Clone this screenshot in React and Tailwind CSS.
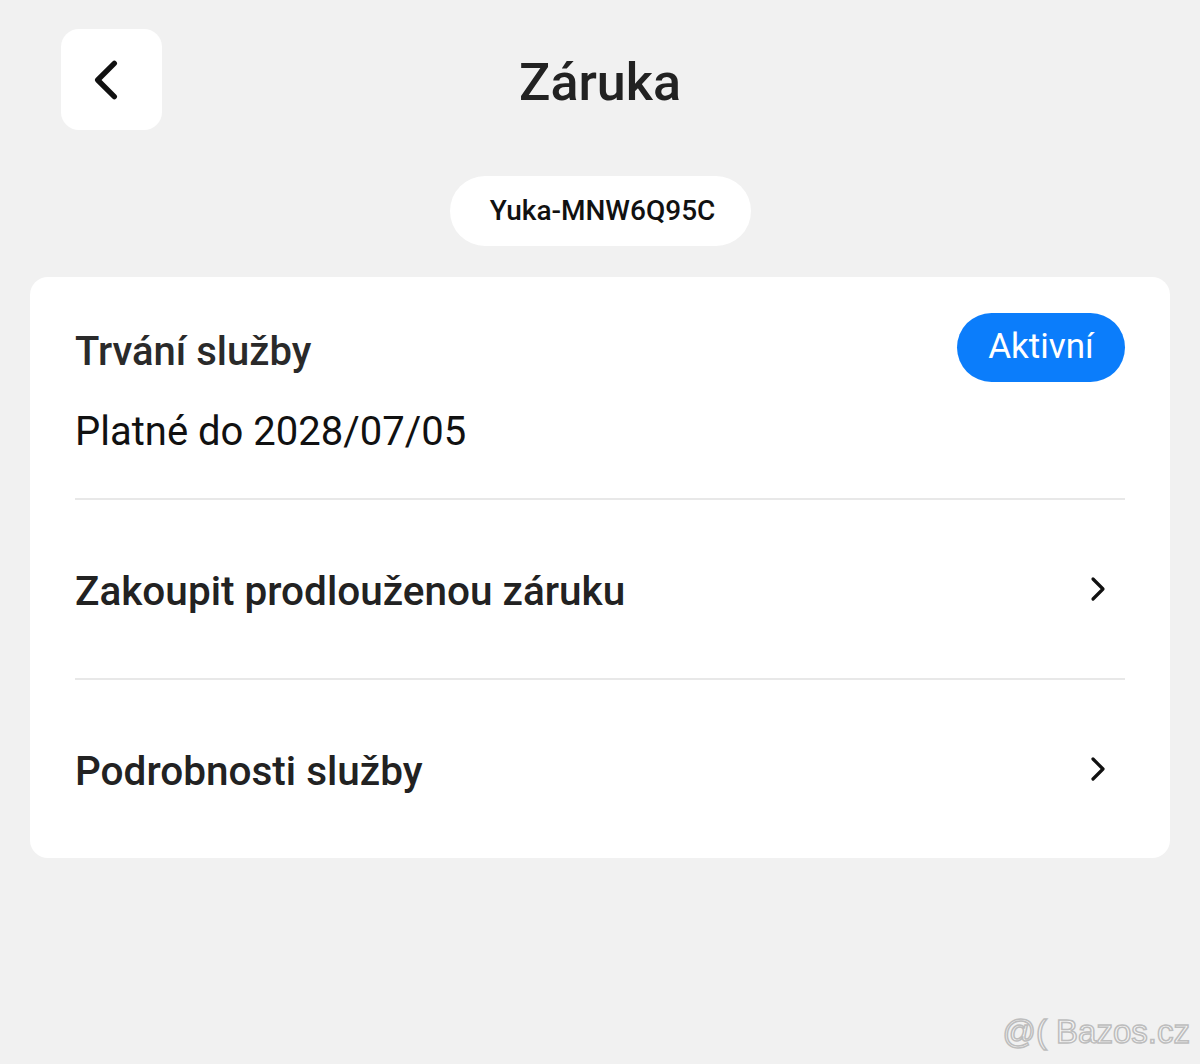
import React from 'react';

function Chevron({ dir = 'right', className = '' }) {
    return (
        <svg className={className} viewBox="0 0 18 26" fill="none" stroke="currentColor" strokeWidth="3.2" strokeLinecap="round" strokeLinejoin="round">
            <path d={dir === 'right' ? 'M4 3 L14 13 L4 23' : 'M14 3 L4 13 L14 23'} />
        </svg>
    );
}

function Row({ label }) {
    return (
        <div className="h-[180px] flex items-center justify-between border-t-2 border-[#e8e8e8]">
            <span className="mt-[4px] text-[40.5px] font-medium text-[#222]">{label}</span>
            <Chevron className="w-[18px] h-[26px] mr-[18px] text-[#111]" />
        </div>
    );
}

export default function App() {
    return (
        <div className="relative w-[1200px] h-[1064px] bg-[#f1f1f1] overflow-hidden font-['Roboto',sans-serif]">
            {/* Header */}
            <div className="relative h-[160px] flex items-start justify-center">
                <button className="absolute left-[61px] top-[29px] w-[101px] h-[101px] bg-white rounded-[18px] flex items-center justify-center">
                    <Chevron dir="left" className="w-[30px] h-[48px] text-[#111] -ml-[12px]" />
                </button>
                <h1 className="mt-[53px] text-[52px] leading-[60px] font-medium text-[#222]">Záruka</h1>
            </div>

            {/* Device pill */}
            <div className="flex justify-center mt-[16px]">
                <div className="w-[301px] h-[70px] bg-white rounded-full flex items-center justify-center pl-[5px]">
                    <span className="text-[28px] font-medium text-[#111]">Yuka-MNW6Q95C</span>
                </div>
            </div>

            {/* Card */}
            <div className="mx-[30px] mt-[31px] bg-white rounded-[18px] px-[45px]">
                <div className="h-[221px] pt-[36px]">
                    <div className="flex items-start justify-between">
                        <span className="mt-[9px] text-[40px] font-medium text-[#2a2a2a]">Trvání služby</span>
                        <span className="w-[168px] h-[69px] rounded-full bg-[#0b7dfb] text-white text-[35px] flex items-center justify-center">Aktivní</span>
                    </div>
                    <div className="mt-[20px] text-[40px] text-[#111]">Platné do 2028/07/05</div>
                </div>
                <Row label="Zakoupit prodlouženou záruku" />
                <Row label="Podrobnosti služby" />
            </div>

            {/* Watermark */}
            <div className="absolute right-[10px] bottom-[8px] text-[33px] font-['Liberation_Sans',sans-serif] text-white/40 [-webkit-text-stroke:1.5px_#bdbdbd]">
                @( Bazos.cz
            </div>
        </div>
    );
}
